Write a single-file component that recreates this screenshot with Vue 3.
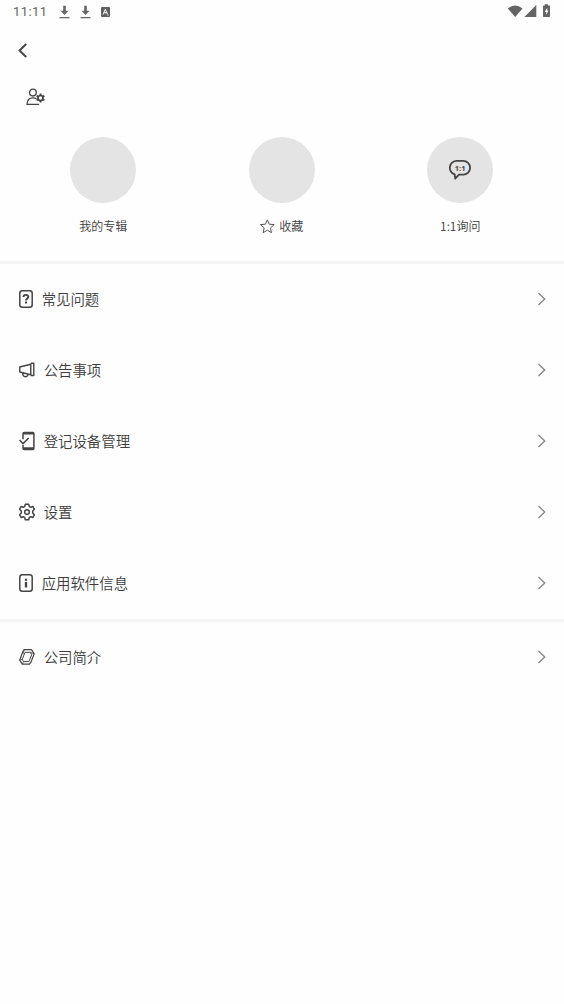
<script setup>
const rows = [
  { icon: 'faq', label: '常见问题' },
  { icon: 'notice', label: '公告事项' },
  { icon: 'device', label: '登记设备管理' },
  { icon: 'settings', label: '设置' },
  { icon: 'info', label: '应用软件信息' },
  { icon: 'company', label: '公司简介' },
]
const groups = [rows.slice(0, 5), rows.slice(5)]
</script>

<template>
  <main class="screen">
    <div class="status">
      <span class="time">11:11</span>
      <svg v-for="n in 2" :key="n" class="dl" width="11" height="14" viewBox="0 0 11 14">
        <path d="M4.2 .8h2.600v5h2.700L5.500 10 1.500 5.800h2.700zM.5 12h10v1.200H.5z" fill="#666" />
      </svg>
      <svg class="badge" width="9" height="10" viewBox="0 0 9 10">
        <rect width="9" height="10" rx="1" fill="#606060" />
        <path d="M2 7.500 4.300 2.300 6.500 7.200M3 5.800h2.800M6.300 8h1.200" fill="none" stroke="#fff" stroke-width="1" />
      </svg>
      <svg class="signals" width="44" height="14" viewBox="0 0 44 14">
        <g fill="#646464">
          <path d="M.8 4.400Q8-1.200 15.500 4.400L8.200 13z" />
          <path d="M29.300 1v12H17.300z" />
          <path d="M37.800 1.400V.3h3.200v1.100h1.200q.8 0 .8.8v9.900q0 .9-.8.9h-5.400q-.8 0-.8-.9V2.200q0-.8.8-.8z" />
        </g>
        <path d="M40.200 3.700 37.700 8h1.500v2.800L41.500 6.600H40.200z" fill="#fff" />
      </svg>
    </div>

    <header class="header">
      <svg width="11" height="15" viewBox="0 0 11 15">
        <path d="M9.200 1 2.500 7.500l6.700 6.500" fill="none" stroke="#444" stroke-width="1.900" />
      </svg>
    </header>

    <div class="account">
      <svg width="20" height="18" viewBox="0 0 20 18" fill="none" stroke="#444">
        <circle cx="6.900" cy="4.600" r="3.400" stroke-width="1.300" />
        <path d="M10.500 10.700Q9 9.800 6.800 9.800C3.200 9.800 1.200 12 1 16.300H13.200" stroke-width="1.300" />
        <circle cx="14.500" cy="10" r="2.500" stroke-width="1.700" />
        <g stroke-width="1.900">
          <path v-for="a in [0, 60, 120, 180, 240, 300]" :key="a" d="M14.500 7.800V5.500" :transform="`rotate(${a} 14.500 10)`" />
        </g>
      </svg>
    </div>

    <section class="shortcuts">
      <div class="shortcut">
        <div class="circle"></div>
        <div class="caption">我的专辑</div>
      </div>
      <div class="shortcut">
        <div class="circle"></div>
        <div class="caption">
          <svg class="star" width="15" height="15" viewBox="0 0 15 15">
            <path d="M7.300 .9 9.200 5.200l5 .4-3.800 3.300 1.100 4.800-4.200-2.500-4.200 2.500 1.100-4.800L.4 5.600l5-.4z" fill="none" stroke="#555" stroke-linejoin="round" />
          </svg>
          收藏
        </div>
      </div>
      <div class="shortcut">
        <div class="circle">
          <svg class="chat" width="24" height="22" viewBox="0 0 24 22">
            <path d="M9 1.900h6.200a6.900 6.900 0 0 1 0 13.800H11L7.200 19.700 6.700 15.400A6.900 6.900 0 0 1 9 1.900z" fill="none" stroke="#444" stroke-width="1.800" stroke-linejoin="round" />
            <text x="12.200" y="11.800" text-anchor="middle" class="ratio">1:1</text>
          </svg>
        </div>
        <div class="caption">1:1询问</div>
      </div>
    </section>

    <nav v-for="(group, i) in groups" :key="i" class="menu">
      <div v-for="row in group" :key="row.icon" class="row">
        <svg v-if="row.icon === 'faq' || row.icon === 'info'" class="icon" width="14" height="18" viewBox="0 0 14 18" fill="none" stroke="#444">
          <rect x=".8" y=".8" width="12.400" height="16.400" rx="2.500" stroke-width="1.500" />
          <template v-if="row.icon === 'faq'">
            <path d="M4.500 7.100C4.500 4.200 9.300 4.300 9.300 6.800 9.300 8.500 7 8.400 7 10.600" stroke-width="1.900" />
            <path d="M7 11.600v2" stroke-width="2" />
          </template>
          <template v-else>
            <path d="M7 4.800v2M7 8v5.400" stroke-width="2.300" />
          </template>
        </svg>
        <svg v-else-if="row.icon === 'notice'" class="icon" width="16" height="16" viewBox="0 0 16 16" fill="none" stroke="#444" stroke-width="1.400" stroke-linejoin="round">
          <path d="M11.800 2.200 .8 5v5l11 2.700zM11.800 1.200h3v12.300h-3M3.600 11q.2 3.700 2.800 3.700 2.400 0 2.600-2.500" />
        </svg>
        <svg v-else-if="row.icon === 'device'" class="icon" width="16" height="20" viewBox="0 0 16 20" fill="none" stroke="#444">
          <path d="M4 8.200V2.700q0-1.200 1.200-1.200h8.500q1.200 0 1.200 1.200v14.600q0 1.200-1.200 1.200H5.200Q4 18.500 4 17.300V14" stroke-width="1.500" />
          <path d="M4 2.200h11M4 17.500h11" stroke-width="2.400" />
          <path d="M.5 9 4 12.600 9.700 7" stroke-width="1.500" />
        </svg>
        <svg v-else-if="row.icon === 'settings'" class="icon" width="16" height="18" viewBox="0 0 16 18" fill="none" stroke="#444" stroke-width="1.500" stroke-linejoin="round">
          <path d="M6.300 1.200h3.400l.5 2.200 1.500.9 2.200-.8 1.500 2.800-1.700 1.700v2l1.700 1.700-1.500 2.800-2.200-.8-1.500.9-.5 2.200H6.300l-.5-2.200-1.500-.9-2.200.8L.6 11.700 2.300 10V8L.6 6.300l1.500-2.800 2.200.8 1.500-.9z" />
          <circle cx="8" cy="9" r="2.300" />
        </svg>
        <svg v-else class="icon" width="16" height="16" viewBox="0 0 16 16" fill="none" stroke="#444" stroke-linejoin="round">
          <path d="M5.200.7h7.300L15.200 4.800 12 13.100l-1.500 2.100H3.300L.7 11.200 3.700 3z" stroke-width="1.200" />
          <path d="M6 3.300h5.500l1.200 2.400-2.800 6.900H4.500L3.300 10.300z" stroke-width="1" />
          <path d="M5.200.9 3.900 5M11.500 3.300l3.700 1.500M.8 11.200l2.500-.9M3.300 15.100l1.200-2.500" stroke-width=".8" />
        </svg>
        <span class="label">{{ row.label }}</span>
        <svg class="chevron" width="9" height="14" viewBox="0 0 9 14">
          <path d="M1.500 1 7.700 7 1.500 13" fill="none" stroke="#888" stroke-width="1.400" />
        </svg>
      </div>
    </nav>
  </main>
</template>

<style>
body {
  background: #fefefe;
}
</style>

<style scoped>
.screen {
  width: 564px;
  height: 1004px;
  overflow: hidden;
  background: #fefefe;
  color: #3c3c3c;
  font-family: "Noto Sans CJK SC", sans-serif;
  font-weight: 350;
}
svg {
  display: block;
  flex: none;
}
.status {
  display: flex;
  align-items: center;
  height: 24px;
  padding: 0 13px;
}
.time {
  width: 46px;
  font: 13px/24px Roboto, sans-serif;
  letter-spacing: 0.4px;
  color: #666;
}
.dl {
  margin: -1px 9.5px 0 0;
}
.badge {
  margin-left: 0.5px;
}
.signals {
  margin: -2px 0 0 auto;
}
.header {
  display: flex;
  align-items: center;
  height: 53px;
  padding-left: 17px;
}
.account {
  display: flex;
  align-items: center;
  height: 40px;
  padding-left: 26px;
}
.shortcuts {
  box-sizing: border-box;
  display: grid;
  grid-template-columns: repeat(3, 178.5px);
  padding: 20px 0 0 14px;
  height: 144px;
}
.shortcut {
  display: flex;
  flex-direction: column;
  align-items: center;
}
.circle {
  display: flex;
  align-items: center;
  justify-content: center;
  width: 66px;
  height: 66px;
  border-radius: 50%;
  background: #e4e4e4;
}
.chat {
  margin-bottom: 1px;
}
.ratio {
  font: 700 7.5px "Open Sans", sans-serif;
  fill: #444;
}
.caption {
  display: flex;
  align-items: center;
  height: 20px;
  margin-top: 13px;
  font-size: 12px;
  line-height: 20px;
}
.star {
  margin-right: 4px;
}
.menu {
  border-top: 3px solid #f5f5f5;
}
.row {
  box-sizing: border-box;
  display: flex;
  align-items: center;
  height: 71px;
  padding: 0 18px 1px 19px;
}
.label {
  margin-left: 8.7px;
  font-size: 14.4px;
  line-height: 22px;
}
.chevron {
  margin-left: auto;
}
</style>
